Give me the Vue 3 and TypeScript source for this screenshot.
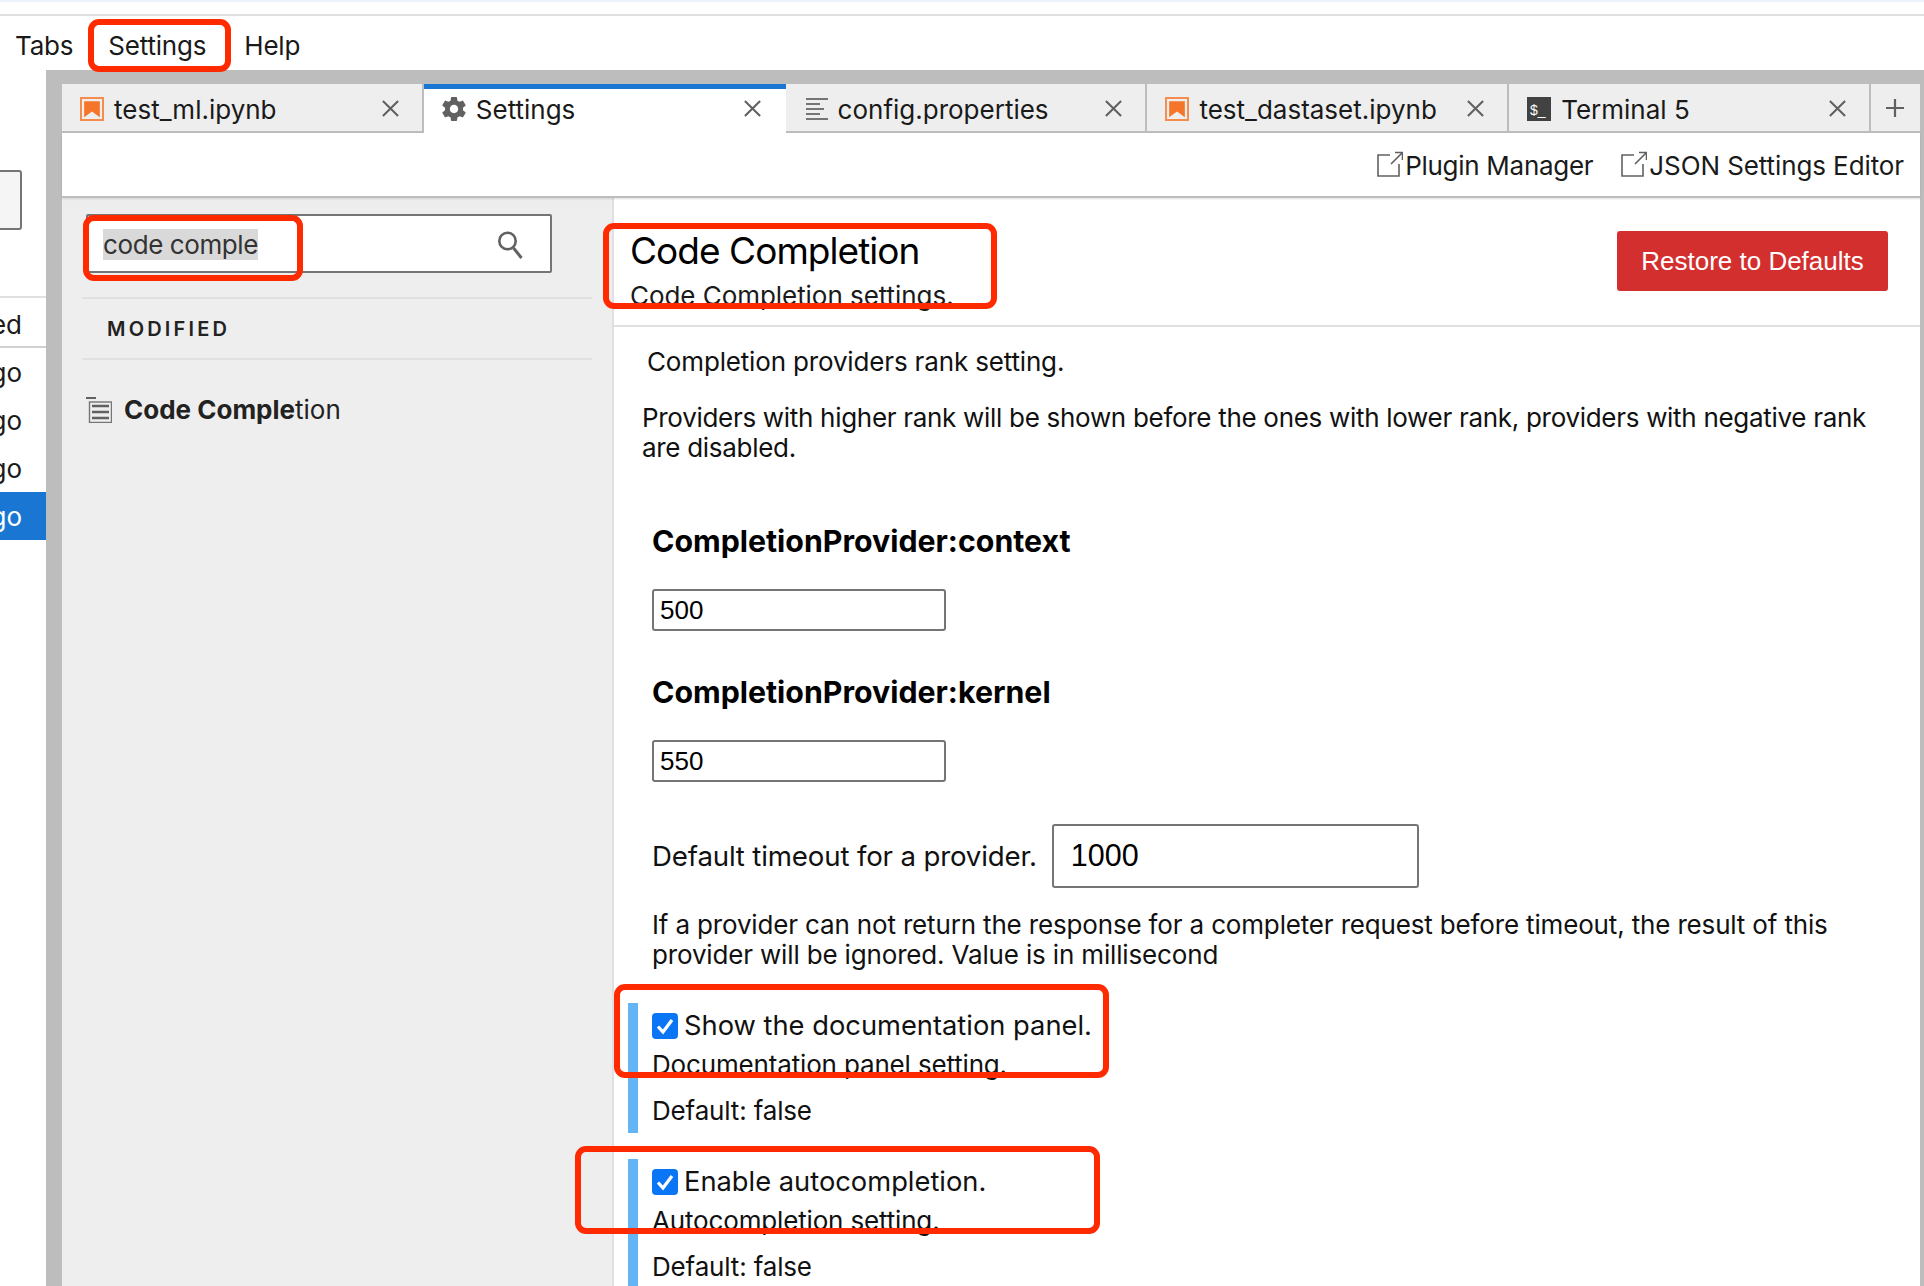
<script setup lang="ts">
interface Tab {
  label: string
  icon: 'notebook' | 'gear' | 'text' | 'terminal'
  active?: boolean
}

const menus = ['Tabs', 'Settings', 'Help']

const tabs: Tab[] = [
  { label: 'test_ml.ipynb', icon: 'notebook' },
  { label: 'Settings', icon: 'gear', active: true },
  { label: 'config.properties', icon: 'text' },
  { label: 'test_dastaset.ipynb', icon: 'notebook' },
  { label: 'Terminal 5', icon: 'terminal' }
]

const links = ['Plugin Manager', 'JSON Settings Editor']
const browserRows = [false, false, false, true]

const checks = [
  { title: 'Show the documentation panel.', desc: 'Documentation panel setting.' },
  { title: 'Enable autocompletion.', desc: 'Autocompletion setting.' }
]
</script>

<template>
  <div class="page">
    <div class="top-strip"></div>
    <div class="menubar">
      <span v-for="m in menus" :key="m" class="menu-item">{{ m }}</span>
    </div>

    <div class="workspace">
      <!-- file browser, cut off by the crop -->
      <aside class="browser">
        <div class="browser-box"></div>
        <div class="browser-head"><span>ed</span></div>
        <div v-for="(sel, i) in browserRows" :key="i" class="browser-row" :class="{ selected: sel }"><span>go</span></div>
      </aside>

      <main class="dock">
        <div class="tabbar">
          <div v-for="t in tabs" :key="t.label" class="tab" :class="{ active: t.active }">
            <svg v-if="t.icon === 'notebook'" class="tab-icon" viewBox="1.8 1.8 18.4 18.4">
              <path fill="#f58b4c" d="M20.2 1.8H1.8v18.4h18.4V1.8zm-1.5 1.5v15.4H3.3V3.3h15.4z" />
              <path fill="#f5762a" d="M17 5H5v12.4l6-4.4 6 4.4z" />
            </svg>
            <svg v-else-if="t.icon === 'gear'" class="tab-icon" viewBox="2 2 20 20">
              <path fill="#616161" d="M19.43 12.98c.04-.32.07-.64.07-.98s-.03-.66-.07-.98l2.11-1.65c.19-.15.24-.42.12-.64l-2-3.46c-.12-.22-.39-.3-.61-.22l-2.49 1c-.52-.4-1.08-.73-1.69-.98l-.38-2.65C14.46 2.18 14.25 2 14 2h-4c-.25 0-.46.18-.49.42l-.38 2.65c-.61.25-1.17.59-1.69.98l-2.49-1c-.23-.09-.49 0-.61.22l-2 3.46c-.13.22-.07.49.12.64l2.11 1.65c-.04.32-.07.65-.07.98s.03.66.07.98l-2.11 1.65c-.19.15-.24.42-.12.64l2 3.46c.12.22.39.3.61.22l2.49-1c.52.4 1.08.73 1.69.98l.38 2.65c.03.24.24.42.49.42h4c.25 0 .46-.18.49-.42l.38-2.65c.61-.25 1.17-.59 1.69-.98l2.49 1c.23.09.49 0 .61-.22l2-3.46c.12-.22.07-.49-.12-.64l-2.11-1.65zM12 15.5c-1.93 0-3.5-1.57-3.5-3.5s1.57-3.5 3.5-3.5 3.5 1.57 3.5 3.5-1.57 3.5-3.5 3.5z" />
            </svg>
            <svg v-else-if="t.icon === 'text'" class="tab-icon text-icon" viewBox="0 0 22 22">
              <path fill="#757575" d="M0 0h22v2H0zM0 5h14v2H0zM0 10h18v2H0zM0 15h14v2H0zM0 20h22v2H0z" />
            </svg>
            <svg v-else class="tab-icon" viewBox="0 0 24 24">
              <rect width="24" height="24" fill="#424242" />
              <text x="3" y="17.5" fill="#fff" font-size="14" font-family="Liberation Sans, sans-serif">$_</text>
            </svg>
            <span class="tab-label">{{ t.label }}</span>
            <svg class="tab-close" viewBox="0 0 20 20">
              <path d="M2 2l16 16M18 2L2 18" fill="none" stroke="#616161" stroke-width="2.2" />
            </svg>
          </div>
          <div class="tab-add">
            <svg viewBox="0 0 20 20" width="20" height="20">
              <path d="M10 1v18M1 10h18" fill="none" stroke="#616161" stroke-width="2.2" />
            </svg>
          </div>
        </div>

        <div class="toolbar">
          <span v-for="l in links" :key="l" class="tool-link">
            <svg class="link-icon" viewBox="0 0 26 26">
              <path d="M13 4H1v21h21V13" fill="none" stroke="#616161" stroke-width="1.6" />
              <path d="M14 13L25 2M18 1.5h7.5V9" fill="none" stroke="#616161" stroke-width="1.6" />
            </svg>
            {{ l }}
          </span>
        </div>

        <div class="settings">
          <section class="sidebar">
            <div class="search">
              <span class="search-text">code comple</span>
              <svg class="search-icon" viewBox="0 0 26 30">
                <circle cx="10.5" cy="11" r="8.2" fill="none" stroke="#616161" stroke-width="2.6" />
                <path d="M16.5 18l8 10" fill="none" stroke="#616161" stroke-width="3" />
              </svg>
            </div>
            <div class="group-head">MODIFIED</div>
            <div class="plugin">
              <svg class="plugin-icon" viewBox="0 0 26 26">
                <rect x="0" y="0" width="10" height="2" fill="#616161" />
                <rect x="3.5" y="5" width="22" height="20.5" fill="none" stroke="#757575" stroke-width="1.4" />
                <path d="M6 9h17M6 15h17M6 21h17" stroke="#616161" stroke-width="2.6" />
              </svg>
              <span class="plugin-name"><b>Code Comple</b>tion</span>
            </div>
          </section>

          <section class="content">
            <header class="content-head">
              <div>
                <h1>Code Completion</h1>
                <p class="subtitle">Code Completion settings.</p>
              </div>
              <button class="restore" type="button">Restore to Defaults</button>
            </header>

            <div class="form">
              <p class="rank">Completion providers rank setting.</p>
              <p class="rank-desc">Providers with higher rank will be shown before the ones with lower rank, providers with negative rank are disabled.</p>

              <h2 class="provider first">CompletionProvider:context</h2>
              <input class="small-input" value="500" />
              <h2 class="provider">CompletionProvider:kernel</h2>
              <input class="small-input" value="550" />

              <div class="timeout">
                <span>Default timeout for a provider.</span>
                <input class="big-input" value="1000" />
              </div>
              <p class="timeout-desc">If a provider can not return the response for a completer request before timeout, the result of this provider will be ignored. Value is in millisecond</p>

              <div v-for="c in checks" :key="c.title" class="check-block">
                <div class="check-row">
                  <svg class="check" viewBox="0 0 26 26">
                    <rect width="26" height="26" rx="4" fill="#0b76f5" />
                    <path d="M6 13.5l5 5.5 9-12" fill="none" stroke="#fff" stroke-width="3.2" />
                  </svg>
                  <span>{{ c.title }}</span>
                </div>
                <div class="check-desc">{{ c.desc }}</div>
                <div class="check-default">Default: false</div>
              </div>
            </div>
          </section>
        </div>
      </main>
    </div>

    <!-- red annotations drawn over the screenshot -->
    <div class="mark mark-menu"></div>
    <div class="mark mark-search"></div>
    <div class="mark mark-title"></div>
    <div class="mark mark-doc"></div>
    <div class="mark mark-auto"></div>
  </div>
</template>

<style>
html,
body {
  margin: 0;
  background: #fff;
  overflow: hidden;
}
</style>

<style scoped>
.page {
  position: relative;
  width: 1924px;
  height: 1286px;
  overflow: hidden;
  font-family: Inter, "Liberation Sans", sans-serif;
  font-size: 26px;
  color: #1a1a1a;
  background: #fff;
}

.top-strip {
  height: 2px;
  background: #eef2fb;
}

.menubar {
  display: flex;
  box-sizing: border-box;
  height: 56px;
  margin-top: 12px;
  border-top: 2px solid #e0e0e0;
  padding: 4px 0 0 15px;
  gap: 35px;
  align-items: center;
  letter-spacing: -0.2px;
}

.menu-item:last-child {
  margin-left: 3px;
}

.workspace {
  display: flex;
  height: 1216px;
}

.browser {
  width: 46px;
  flex: none;
  overflow: hidden;
}

.browser-box {
  width: 26px;
  height: 60px;
  margin: 100px 0 66px -4px;
  border: 2px solid #757575;
  border-radius: 3px;
  background: #f5f5f5;
  box-sizing: border-box;
}

.browser-head {
  display: flex;
  justify-content: flex-end;
  width: 22px;
  height: 48px;
  line-height: 54px;
  border-top: 2px solid #e0e0e0;
  border-bottom: 2px solid #d0d0d0;
  padding-right: 24px;
}

.browser-row {
  display: flex;
  justify-content: flex-end;
  width: 22px;
  height: 48px;
  line-height: 50px;
  padding-right: 24px;
}

.browser-row.selected {
  background: #1976d2;
  color: #fff;
}

.dock {
  flex: 1;
  display: flex;
  flex-direction: column;
  min-width: 0;
  background: #bdbdbd;
  padding: 14px 4px 0 16px;
}

.tabbar {
  display: flex;
  height: 49px;
  flex: none;
}

.tab {
  display: flex;
  align-items: center;
  box-sizing: border-box;
  width: 361.8px;
  height: 49px;
  background: #eee;
  border-right: 2px solid #bdbdbd;
  border-bottom: 2px solid #bdbdbd;
  padding: 0 22px 0 18px;
}

.tab.active {
  background: #fff;
  border-top: 5px solid #1976d2;
  border-bottom: 0;
  border-right: 0;
  padding-bottom: 7px;
  padding-right: 24px;
}

.tab-icon {
  width: 24px;
  height: 24px;
  flex: none;
  margin-top: 3px;
}

.text-icon {
  width: 22px;
  height: 22px;
  margin: 3px 0 0 2px;
}

.tab-label {
  flex: 1;
  margin-left: 10px;
  padding-top: 4px;
  white-space: nowrap;
}

.tab-close {
  width: 19px;
  height: 19px;
  flex: none;
  margin-top: 2px;
}

.tab-add {
  flex: 1;
  display: flex;
  align-items: center;
  justify-content: center;
  background: #eee;
  border-bottom: 2px solid #bdbdbd;
  box-sizing: border-box;
}

.toolbar {
  flex: none;
  height: 63px;
  display: flex;
  justify-content: flex-end;
  align-items: center;
  gap: 28px;
  padding-right: 16px;
  background: #fff;
  border-bottom: 2px solid #bdbdbd;
  box-shadow: 0 1px 2px rgba(0, 0, 0, 0.12);
  position: relative;
}

.tool-link {
  display: flex;
  align-items: center;
  padding-top: 2px;
  letter-spacing: -0.1px;
}

.tool-link:first-child {
  letter-spacing: -0.28px;
}

.link-icon {
  width: 26px;
  height: 26px;
  margin-right: 2px;
  margin-top: -3px;
}

.settings {
  flex: 1;
  display: flex;
  min-height: 0;
  background: #fff;
}

.sidebar {
  width: 552px;
  flex: none;
  box-sizing: border-box;
  background: #eee;
  border-right: 2px solid #e0e0e0;
  padding: 16px 20px 0 20px;
}

.search {
  display: flex;
  align-items: center;
  width: 466px;
  height: 59px;
  margin-left: 4px;
  padding: 2px 27px 0 15px;
  box-sizing: border-box;
  border: 2px solid #757575;
  border-radius: 2px;
  background: #fff;
}

.search-text {
  background: #d9d9d9;
  color: #333;
  flex: none;
  letter-spacing: -0.4px;
}

.search-icon {
  width: 26px;
  height: 30px;
  margin-left: auto;
}

.group-head {
  margin-top: 24px;
  height: 59px;
  line-height: 61px;
  padding-left: 25px;
  border-top: 2px solid #e0e0e0;
  border-bottom: 2px solid #e0e0e0;
  font-size: 20px;
  font-weight: 600;
  letter-spacing: 3.2px;
  color: #222;
}

.plugin {
  display: flex;
  align-items: center;
  margin-top: 34px;
  padding-left: 4px;
}

.plugin-icon {
  width: 26px;
  height: 26px;
  flex: none;
}

.plugin-name {
  margin-left: 12px;
  color: #222;
}

.plugin-name b {
  font-weight: 700;
}

.content {
  flex: 1;
  min-width: 0;
}

.content-head {
  height: 129px;
  box-sizing: border-box;
  border-bottom: 2px solid #e0e0e0;
  display: flex;
  justify-content: space-between;
  align-items: flex-start;
  padding: 30px 32px 0 16px;
}

h1 {
  margin: 0;
  font-size: 37px;
  font-weight: 400;
  letter-spacing: -0.95px;
  line-height: 46px;
  color: #000;
}

.subtitle {
  margin: 7px 0 0;
  line-height: 30px;
  letter-spacing: -0.05px;
}

.restore {
  margin-top: 3px;
  width: 271px;
  height: 60px;
  border: 0;
  border-radius: 3px;
  background: #d32f2f;
  color: #fff;
  font-family: "Liberation Sans", Arial, sans-serif;
  font-size: 26px;
}

.form {
  padding-left: 28px;
  padding-right: 20px;
  color: #111;
  letter-spacing: -0.16px;
}

.form p {
  margin: 0;
  line-height: 30px;
}

.rank {
  padding: 20px 0 0 5px;
}

.rank-desc {
  padding-top: 26px;
  letter-spacing: -0.3px;
}

.provider {
  margin: 0;
  padding-left: 10px;
  font-size: 30.3px;
  font-weight: 700;
  line-height: 38px;
  color: #000;
  padding-top: 42px;
  letter-spacing: 0;
}

.provider.first {
  padding-top: 59px;
}

.small-input {
  display: block;
  box-sizing: border-box;
  width: 294px;
  height: 42px;
  margin: 29px 0 0 10px;
  padding: 0 6px;
  border: 2px solid #757575;
  border-radius: 3px;
  font-family: "Liberation Sans", Arial, sans-serif;
  font-size: 26px;
  color: #000;
}

.timeout {
  display: flex;
  align-items: center;
  gap: 15px;
  margin: 42px 0 0 10px;
  font-size: 27.65px;
}

.big-input {
  box-sizing: border-box;
  width: 367px;
  height: 64px;
  padding: 0 17px 2px;
  border: 2px solid #757575;
  border-radius: 3px;
  font-family: "Liberation Sans", Arial, sans-serif;
  font-size: 30.5px;
  color: #000;
}

.timeout-desc {
  margin-top: 22px !important;
  padding-left: 10px;
}

.check-block {
  margin-left: -14px;
  margin-top: 26px;
  height: 130px;
  border-left: 10px solid #64b5f6;
  padding-left: 14px;
}

.timeout-desc + .check-block {
  margin-top: 33px;
}

.check-row {
  display: flex;
  align-items: center;
  gap: 6px;
  padding-top: 10px;
  font-size: 27.3px;
  line-height: 26px;
  letter-spacing: 0;
}

.check {
  width: 26px;
  height: 26px;
  flex: none;
}

.check-desc {
  margin-top: 11px;
  line-height: 30px;
}

.check-default {
  margin-top: 16px;
  line-height: 30px;
}

.mark {
  position: absolute;
  box-sizing: border-box;
  border: 6px solid #ff2a00;
  border-radius: 11px;
}

.mark-menu {
  left: 88px;
  top: 19px;
  width: 143px;
  height: 53px;
}

.mark-search {
  left: 83px;
  top: 215px;
  width: 220px;
  height: 66px;
}

.mark-title {
  left: 603px;
  top: 223px;
  width: 394px;
  height: 86px;
}

.mark-doc {
  left: 614px;
  top: 984px;
  width: 495px;
  height: 94px;
}

.mark-auto {
  left: 575px;
  top: 1146px;
  width: 525px;
  height: 88px;
}
</style>
